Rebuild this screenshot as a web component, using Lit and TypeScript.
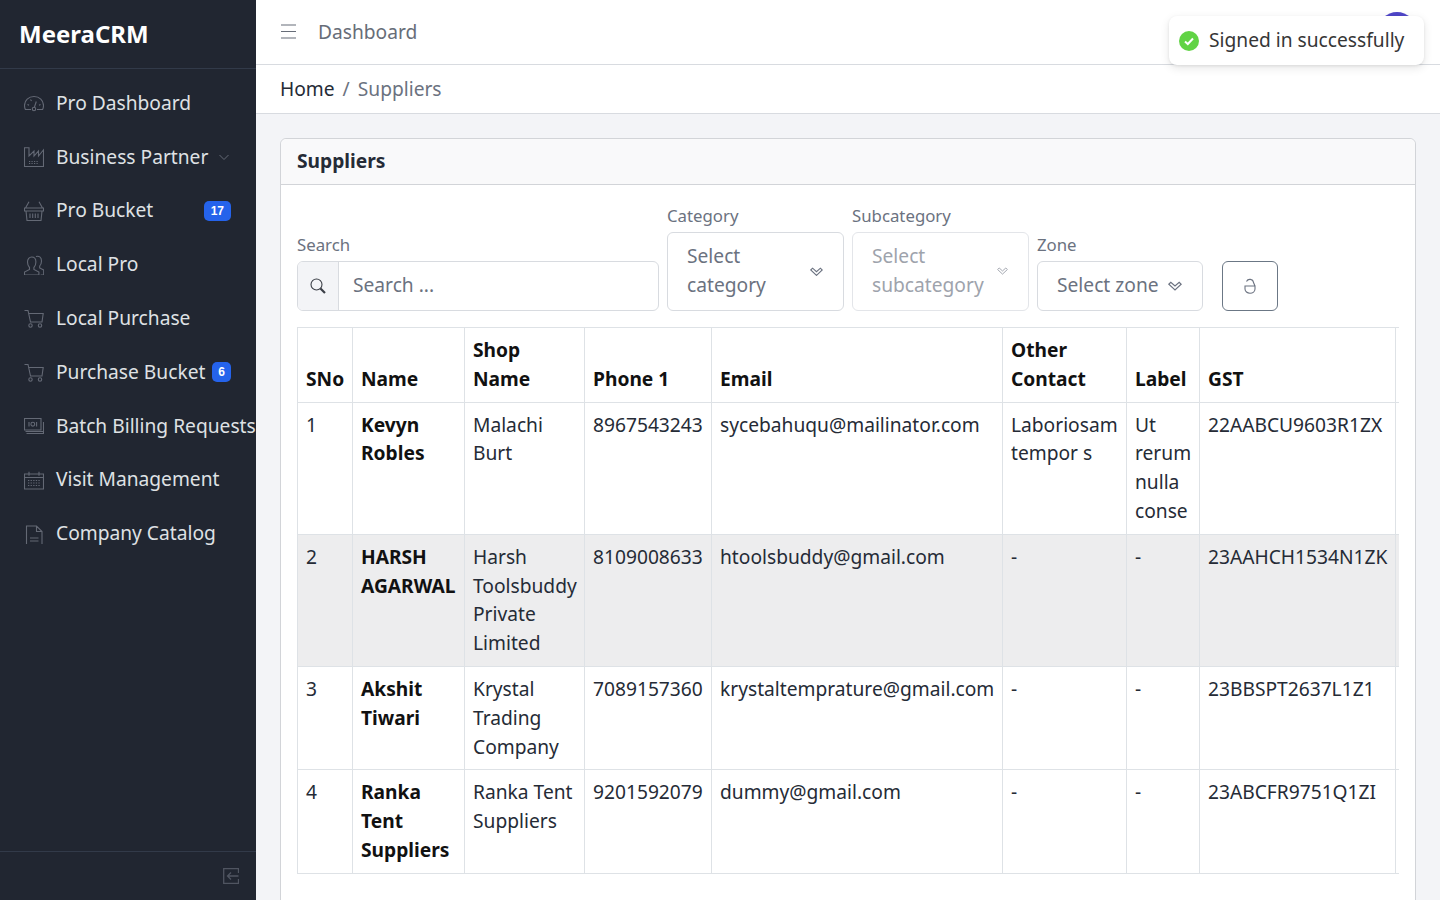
import { LitElement, css, html, svg } from 'lit';
import { customElement } from 'lit/decorators.js';

const icon = (body: unknown, w = 20, h = w, sw = 1.1) => html`<svg
  width=${w} height=${h} viewBox="0 0 ${w} ${h}" fill="none"
  stroke="currentColor" stroke-width=${sw}>${body}</svg>`;

const cart = svg`<path d="M.5 2.500H4L6.500 14H18l1.200-8.500H4.600"/><circle cx="6.500" cy="17.500" r="1.700"/><circle cx="16" cy="17.500" r="1.700"/>`;

const navItems = [
  { label: 'Pro Dashboard', icon: svg`<path d="M7 16.500H1.400A9.500 9.500 0 0 1 .5 12.500C.5 7.500 4.500 3.500 10 3.500s9.500 4 9.500 9c0 1.500-.3 2.800-.9 4H13"/><circle cx="10" cy="16" r="1.700"/><path d="M10.300 14.500 12.300 8.500M3.500 11.500l1.500.7M16.500 11.500l-1.500.7M6.500 6.500l1 1.500"/>` },
  { label: 'Business Partner', chevron: true, icon: svg`<path d="M.5 .7H5V9l5-5v5l4.500-5v5l5-6v16.500H.5z"/><path d="M5 14.500h10M5 16.500h10" stroke-dasharray="1.200 1.300"/>` },
  { label: 'Pro Bucket', badge: '17', icon: svg`<path d="M.5 7h19v3H.5zM2 10l1 9.500h14l1-9.500M1.500 7 5 .7M18.500 7 15 .7"/><path d="M6 12.500v4.500M8.700 12.500v4.500M11.300 12.500v4.500M14 12.500v4.500"/>` },
  { label: 'Local Pro', icon: svg`<path d="M.5 20v-3l5-2.500v-2C4 11 3.500 9 3.500 7c0-3 1.800-5 4.200-5s4.200 2 4.200 5c0 2-.5 4-2 5.500v2l5 2.500v3z"/><path d="M12 1.500c2.800-1 5.500.5 5.500 4.500 0 2-.5 3.500-1.800 5v2l4 2V20h-3"/>` },
  { label: 'Local Purchase', icon: cart },
  { label: 'Purchase Bucket', badge: '6', icon: cart },
  { label: 'Batch Billing Requests', icon: svg`<path d="M.5 2.500H17V14H.5zM19.500 6v11.500H2.500M19 15.500H1.500"/><circle cx="8.800" cy="8.200" r="1.900"/><path d="M5 6v4.500M12.600 6v4.500"/>` },
  { label: 'Visit Management', icon: svg`<path d="M.5 4h19v15H.5zM5 1.700v4M15 1.700v4M.5 7.500h19"/><path d="M4 10.500h12M4 13h12M4 15.500h12" stroke-dasharray="1.300 1.300"/>` },
  { label: 'Company Catalog', icon: svg`<path d="M2.500 2h10L18 7.500V20.500H2.500zM12.500 2v5.500H18M6 14h8.500M6 17h8.500"/>` },
];

const rows = [
  ['1', 'Kevyn Robles', 'Malachi Burt', '8967543243', 'sycebahuqu@mailinator.com', 'Laboriosam tempor s', 'Ut rerum nulla conse', '22AABCU9603R1ZX'],
  ['2', 'HARSH AGARWAL', 'Harsh Toolsbuddy Private Limited', '8109008633', 'htoolsbuddy@gmail.com', '-', '-', '23AAHCH1534N1ZK'],
  ['3', 'Akshit Tiwari', 'Krystal Trading Company', '7089157360', 'krystaltemprature@gmail.com', '-', '-', '23BBSPT2637L1Z1'],
  ['4', 'Ranka Tent Suppliers', 'Ranka Tent Suppliers', '9201592079', 'dummy@gmail.com', '-', '-', '23ABCFR9751Q1ZI'],
];

const chevrons = (w: number) => html`<svg class="dbl" width=${w} height=${w * 0.72} viewBox="0 0 14 10" fill="none" stroke="currentColor" stroke-width="1.200"><path d="M.8 3.200 2.800 1.200 7 5 11.200 1.200 13.200 3.200 7 9z"/></svg>`;

@customElement('app-root')
export class AppRoot extends LitElement {
  static styles = css`
    :host {
      display: flex;
      height: 900px;
      overflow: hidden;
      position: relative;
      font-family: 'Noto Sans', sans-serif;
      font-size: 19.2px;
      line-height: 1.5;
      color: #252b36;
      background: #f3f4f7;
    }
    .sidebar {
      width: 256px;
      flex: none;
      background: #212631;
      color: #dfe1e4;
      display: flex;
      flex-direction: column;
    }
    .brand {
      height: 69px;
      flex: none;
      box-sizing: border-box;
      padding: 0 19px;
      display: flex;
      align-items: center;
      color: #fff;
      font-size: 24px;
      font-weight: 700;
      border-bottom: 1px solid #323a49;
    }
    .nav {
      flex: 1;
      padding-top: 7.4px;
    }
    .nav-item {
      height: 53.8px;
      display: flex;
      align-items: center;
      padding: 0 25px 0 24px;
      white-space: nowrap;
    }
    .nav-item svg {
      color: #646975;
      flex: none;
    }
    .nav-icon {
      width: 32px;
      flex: none;
      display: flex;
    }
    .badge {
      margin-left: auto;
      background: #2563eb;
      color: #fff;
      font-family: 'Liberation Sans', sans-serif;
      font-size: 12px;
      font-weight: 700;
      line-height: 20px;
      padding: 0 7px;
      border-radius: 5px;
    }
    .badge.single {
      padding: 0 6px;
    }
    .chev {
      margin-left: 10px;
    }
    .sidebar-foot {
      height: 48px;
      flex: none;
      border-top: 1px solid #323a49;
      display: flex;
      align-items: center;
      justify-content: flex-end;
      padding-right: 17px;
      color: #505561;
    }
    .main {
      flex: 1;
      min-width: 0;
    }
    .topbar {
      height: 65px;
      box-sizing: border-box;
      background: #fff;
      border-bottom: 1px solid #d8dbe0;
      display: flex;
      align-items: center;
      padding: 0 24px 0 25px;
      color: #676d78;
    }
    .topbar svg {
      margin: 0 22px 2px 0;
    }
    .avatar {
      position: absolute;
      top: 12px;
      right: 24px;
      width: 38px;
      height: 38px;
      border-radius: 50%;
      background: #4f46c8;
    }
    .crumbs {
      height: 49px;
      box-sizing: border-box;
      background: #fff;
      border-bottom: 1px solid #d8dbe0;
      display: flex;
      align-items: center;
      gap: 8px;
      padding: 0 24px;
      color: #6b7280;
    }
    .crumbs span:first-child {
      color: #252b36;
    }
    .content {
      padding: 24px 24px 0 24px;
    }
    .card {
      background: #fff;
      border: 1px solid #d2d4d8;
      border-radius: 6px;
    }
    .card-head {
      height: 46px;
      box-sizing: border-box;
      padding: 0 16px;
      display: flex;
      align-items: center;
      background: #f9f9fa;
      border-bottom: 1px solid #d2d4d8;
      border-radius: 6px 6px 0 0;
      font-weight: 700;
    }
    .card-body {
      padding: 18.8px 16px 48px;
    }
    .filters {
      display: flex;
      align-items: flex-end;
      gap: 8px;
      margin-bottom: 16.5px;
    }
    .field label {
      display: block;
      font-size: 16.8px;
      line-height: 24px;
      color: #6b7280;
      margin-bottom: 4px;
    }
    .input-group {
      width: 362px;
      height: 50px;
      box-sizing: border-box;
      border: 1px solid #d8dbe0;
      border-radius: 6px;
      display: flex;
      align-items: center;
      color: #6b7280;
    }
    .addon {
      width: 40px;
      height: 100%;
      flex: none;
      background: #f3f4f7;
      border-right: 1px solid #d8dbe0;
      border-radius: 5px 0 0 5px;
      display: flex;
      align-items: center;
      justify-content: center;
      color: #3b3f47;
    }
    .placeholder {
      padding-left: 14px;
    }
    .select {
      width: 177px;
      box-sizing: border-box;
      padding: 9.6px 20px 9.6px 19px;
      border: 1px solid #d8dbe0;
      border-radius: 6px;
      display: flex;
      align-items: center;
      justify-content: space-between;
      color: #6b7280;
    }
    .select > span {
      max-width: 115px;
    }
    .select.disabled {
      color: #9ea3ac;
      border-color: #e3e5e9;
    }
    .select.zone {
      width: 166px;
      height: 50px;
    }
    .select.zone > span {
      max-width: none;
      white-space: nowrap;
    }
    .dbl {
      flex: none;
    }
    .reset {
      width: 56px;
      height: 50px;
      box-sizing: border-box;
      margin-left: 11px;
      border: 1px solid #6b7785;
      border-radius: 6px;
      display: flex;
      align-items: center;
      justify-content: center;
      color: #6b7280;
    }
    .table-wrap {
      overflow: hidden;
    }
    table {
      table-layout: fixed;
      width: 1300px;
      border-collapse: collapse;
    }
    th,
    td {
      border: 1px solid #dee2e6;
      padding: 8px;
      text-align: left;
      vertical-align: top;
      box-sizing: border-box;
      color: #252b36;
    }
    th {
      vertical-align: bottom;
      font-weight: 700;
      color: #111;
    }
    td.strong {
      font-weight: 700;
      color: #111;
    }
    tr.hover td {
      background: #ededee;
    }
    .toast {
      position: absolute;
      top: 16px;
      right: 16px;
      width: 255px;
      height: 49px;
      box-sizing: border-box;
      padding: 0 10px;
      display: flex;
      align-items: center;
      gap: 10px;
      background: #fff;
      border-radius: 8px;
      box-shadow: 0 3px 10px rgba(0, 0, 0, 0.1), 0 1px 3px rgba(0, 0, 0, 0.08);
      color: #363636;
      white-space: nowrap;
    }
  `;

  private _nav() {
    return navItems.map(
      (item) => html`<div class="nav-item">
        <span class="nav-icon">${icon(item.icon)}</span>
        <span>${item.label}</span>
        ${item.chevron
          ? html`<svg class="chev" width="12" height="12" viewBox="0 0 12 12" fill="none" stroke="currentColor"><path d="M1.500 4 6 8.500 10.500 4"/></svg>`
          : ''}
        ${item.badge
          ? html`<span class="badge ${item.badge.length === 1 ? 'single' : ''}">${item.badge}</span>`
          : ''}
      </div>`,
    );
  }

  render() {
    return html`
      <aside class="sidebar">
        <div class="brand">MeeraCRM</div>
        <div class="nav">${this._nav()}</div>
        <div class="sidebar-foot">
          ${icon(svg`<path d="M15.500 5V.7H.7v14.600h14.800V11M15.500 8H5M8 4.500 4.500 8 8 11.500"/>`, 16, 16, 1.300)}
        </div>
      </aside>
      <div class="main">
        <div class="topbar">
          ${icon(svg`<path d="M0 2h15M0 8.500h15M0 15h15"/>`, 15, 17, 1.200)}
          <span>Dashboard</span>
        </div>
        <div class="crumbs"><span>Home</span><span>/</span><span>Suppliers</span></div>
        <div class="content">
          <div class="card">
            <div class="card-head">Suppliers</div>
            <div class="card-body">
              <div class="filters">
                <div class="field">
                  <label>Search</label>
                  <div class="input-group">
                    <span class="addon">${icon(svg`<circle cx="6.500" cy="6.500" r="5.500"/><path d="M10.500 10.500l4.500 4.500" stroke-width="2.200"/>`, 16, 16, 1.100)}</span>
                    <span class="placeholder">Search ...</span>
                  </div>
                </div>
                <div class="field">
                  <label>Category</label>
                  <div class="select"><span>Select category</span>${chevrons(13)}</div>
                </div>
                <div class="field">
                  <label>Subcategory</label>
                  <div class="select disabled"><span>Select subcategory</span>${chevrons(11)}</div>
                </div>
                <div class="field">
                  <label>Zone</label>
                  <div class="select zone"><span>Select zone</span>${chevrons(14)}</div>
                </div>
                <div class="reset">
                  ${icon(svg`<path d="M2.500 3.500A3.700 3.700 0 0 1 9.500 4.500L11 8M1 8h10v3a5 4.200 0 0 1-10 0z"/>`, 12, 16, 1.100)}
                </div>
              </div>
              <div class="table-wrap">
                <table>
                  <colgroup>
                    <col style="width:55px" /><col style="width:112px" /><col style="width:120px" />
                    <col style="width:127px" /><col style="width:291px" /><col style="width:124px" />
                    <col style="width:73px" /><col style="width:196px" /><col style="width:202px" />
                  </colgroup>
                  <thead>
                    <tr>
                      ${['SNo', 'Name', 'Shop Name', 'Phone 1', 'Email', 'Other Contact', 'Label', 'GST', ''].map(
                        (h) => html`<th>${h}</th>`,
                      )}
                    </tr>
                  </thead>
                  <tbody>
                    ${rows.map(
                      (r, n) => html`<tr class=${n === 1 ? 'hover' : ''}>
                        ${r.map((c, i) => html`<td class=${i === 1 ? 'strong' : ''}>${c}</td>`)}
                        <td></td>
                      </tr>`,
                    )}
                  </tbody>
                </table>
              </div>
            </div>
          </div>
        </div>
      </div>
      <div class="avatar"></div>
      <div class="toast">
        <svg width="20" height="20" viewBox="0 0 20 20">
          <circle cx="10" cy="10" r="10" fill="#61d345" />
          <path d="M6 10.500l2.800 2.500L14 7.500" fill="none" stroke="#fff" stroke-width="2" />
        </svg>
        <span>Signed in successfully</span>
      </div>
    `;
  }
}
